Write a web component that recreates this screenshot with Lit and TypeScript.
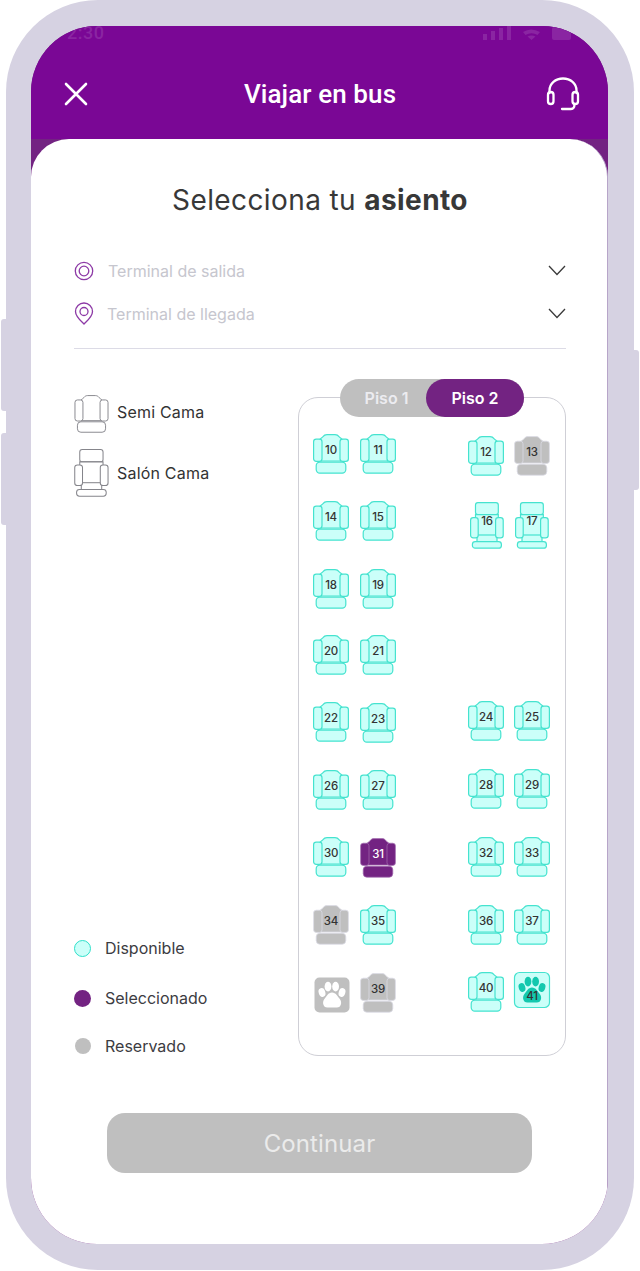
import { LitElement, html, css, svg } from "lit";
import { customElement } from "lit/decorators.js";

type Kind = "std" | "tall" | "paw";
type St = "a" | "s" | "r";
interface Seat { n?: number; col: number; row: number; st: St; kind: Kind; dy: number; dx?: number; }

const S = (n: number | undefined, col: number, row: number, st: St, dy = 0, kind: Kind = "std", dx = 0): Seat =>
  ({ n, col, row, st, kind, dy, dx });

const seats: Seat[] = [
  S(10, 0, 0, "a", 0), S(11, 1, 0, "a", 0), S(12, 2, 0, "a", 2), S(13, 3, 0, "r", 2),
  S(14, 0, 1, "a", 0), S(15, 1, 1, "a", 0), S(16, 2, 1, "a", 1, "tall", 2), S(17, 3, 1, "a", 1, "tall", 1),
  S(18, 0, 2, "a", 0), S(19, 1, 2, "a", 0),
  S(20, 0, 3, "a", -1), S(21, 1, 3, "a", -1),
  S(22, 0, 4, "a", -1), S(23, 1, 4, "a", 0), S(24, 2, 4, "a", -2), S(25, 3, 4, "a", -2),
  S(26, 0, 5, "a", -1), S(27, 1, 5, "a", -1), S(28, 2, 5, "a", -2), S(29, 3, 5, "a", -2),
  S(30, 0, 6, "a", -1), S(31, 1, 6, "s", 0), S(32, 2, 6, "a", -1), S(33, 3, 6, "a", -1),
  S(34, 0, 7, "r", 0), S(35, 1, 7, "a", 0), S(36, 2, 7, "a", 0), S(37, 3, 7, "a", 0),
  S(undefined, 0, 8, "r", 4, "paw", 1), S(39, 1, 8, "r", 0), S(40, 2, 8, "a", -1), S(41, 3, 8, "a", -1, "paw"),
];

const stdShape = svg`
  <path class="b" d="M5.5 27V8.500C5.500 4.500 8.500 4.800 10 2.700C11 1.200 12.500.6 14 .6H22C23.500.6 25 1.200 26 2.700C27.500 4.800 30.500 4.500 30.500 8.500V27Z"/>
  <rect class="b" x="3.200" y="28.200" width="29.600" height="11" rx="3.600"/>
  <rect class="b" x=".6" y="5.200" width="8.400" height="22.200" rx="2.600"/>
  <rect class="b" x="27" y="5.200" width="8.400" height="22.200" rx="2.600"/>`;

const tallShape = svg`
  <rect class="b" x="5.500" y=".6" width="22.800" height="12" rx="2.400"/>
  <path class="b" d="M5.500 12.600H28.300V35H5.500Z"/>
  <rect class="b" x="7" y="33" width="20" height="7"/>
  <rect class="b" x="2.400" y="39.600" width="29" height="6.600" rx="2.800"/>
  <rect class="b" x=".6" y="15.600" width="7.600" height="20.200" rx="2.600"/>
  <rect class="b" x="25.600" y="15.600" width="7.600" height="20.200" rx="2.600"/>`;

const pawShape = svg`
  <rect class="tile" x=".5" y=".5" width="35" height="35" rx="5"/>
  <g class="p">
    <ellipse cx="8" cy="15.500" rx="3.300" ry="4.400" transform="rotate(-18 8 15.500)"/>
    <ellipse cx="14" cy="9.600" rx="3.400" ry="4.900"/>
    <ellipse cx="21.600" cy="9.600" rx="3.400" ry="4.900"/>
    <ellipse cx="28" cy="15.500" rx="3.300" ry="4.400" transform="rotate(18 28 15.500)"/>
    <path d="M18 15.600C14 15.600 12.800 19.400 10.600 21.800C7.800 25 9 30.600 13.400 30.600H22.800C27.400 30.600 28.400 25 25.600 21.800C23.400 19.400 22 15.600 18 15.600Z"/>
  </g>`;

@customElement("seat-icon")
export class SeatIcon extends LitElement {
  static properties = { seat: { attribute: false } };
  declare seat: Seat;
  static styles = css`
    :host { display: block; position: relative; width: fit-content; }
    svg { display: block; overflow: visible; }
    .b { stroke-width: 1.2; }
    .a .b { fill: #cbfff9; stroke: #45e3cf; }
    .s .b { fill: #732382; stroke: #a36fb0; stroke-width: .7; }
    .r .b { fill: #bfbfbf; stroke: #dcdce6; stroke-width: .8; }
    .a .tile { fill: #cbfff9; stroke: #45e3cf; stroke-width: 1.2; }
    .r .tile { fill: #bfbfbf; stroke: none; }
    .a .p { fill: #13c8ae; }
    .r .p { fill: #fff; }
    .num {
      position: absolute; left: 0; right: 0; text-align: center;
      font: 500 11.5px/14px Inter, "Liberation Sans", sans-serif;
      color: #333; letter-spacing: -.2px;
    }
    .num.s { color: #fff; }
    .std { top: 9px; }
    .tall { top: 12px; }
    .paw { top: 17px; }
  `;
  render() {
    const s = this.seat;
    const dims = s.kind === "tall" ? [34, 47] : s.kind === "paw" ? [36, 36] : [36, 40];
    const shape = s.kind === "tall" ? tallShape : s.kind === "paw" ? pawShape : stdShape;
    return html`
      <svg class=${s.st} width=${dims[0]} height=${dims[1]} viewBox="0 0 ${dims[0]} ${dims[1]}">${shape}</svg>
      ${s.n !== undefined ? html`<span class="num ${s.kind} ${s.st}">${s.n}</span>` : ""}
    `;
  }
}

@customElement("app-root")
export class AppRoot extends LitElement {
  static styles = css`
    :host { display: block; width: 640px; height: 1271px; background: #fff; position: relative; overflow: hidden;
      font-family: Inter, "Liberation Sans", sans-serif; }
    .bump { position: absolute; width: 8px; background: #d6d2e2; border-radius: 3px; }
    .b1 { left: 1px; top: 319px; height: 92px; }
    .b2 { left: 1px; top: 433px; height: 92px; }
    .b3 { right: 1px; top: 350px; height: 140px; }
    .frame { position: relative; box-sizing: border-box; margin-left: 6px; width: 628px; height: 1270px;
      background: #d6d2e2; border-radius: 92px; padding: 26px 26px 26px 25px; }
    .screen { height: 1218px; border-radius: 66px; overflow: hidden; background: #732382;
      display: flex; flex-direction: column; }
    .head { height: 113px; background: #7a0795; color: #fff; flex: none; box-sizing: border-box; }
    .status { height: 14px; display: flex; align-items: center; justify-content: space-between;
      padding: 0 37px 0 36px; color: #8a25a2; font: 500 18px/14px Roboto, sans-serif; letter-spacing: .5px; }
    .status svg { display: block; }
    .nav { display: flex; align-items: center; justify-content: space-between; padding: 37px 28px 0 33px; }
    .nav h1 { margin: 0 0 0 6px; font: 500 26px/34px Roboto, sans-serif; letter-spacing: .1px; }
    .nav svg { display: block; }
    .card { flex: 1; background: #fff; border-radius: 38px 38px 0 0; border-right: 1px solid #b7a5c9;
      padding: 44px 41px 0 43px; box-sizing: border-box; }
    .title { margin: 0; text-align: center; font: 400 28px/34px Inter, sans-serif; color: #383838; letter-spacing: .4px; }
    .title b { font-weight: 700; }
    .terms { margin-top: 32px; border-bottom: 1px solid #dcdbe6; padding-bottom: 13px; }
    .term { height: 43px; display: flex; align-items: center; color: #c6c6ce; font-size: 16px; }
    .term svg.ic { flex: none; margin-right: 14px; }
    .term .ch { margin-left: auto; }
    .main { display: flex; justify-content: space-between; margin-top: 30px; }
    .left { display: flex; flex-direction: column; font-size: 16px; color: #333; padding-top: 16px; }
    .lg { display: flex; align-items: center; gap: 8px; letter-spacing: .2px; }
    .lg svg { display: block; }
    .lg .up { margin-bottom: 4px; }
    .lg + .lg { margin-top: 16px; }
    .status-list { margin-top: auto; color: #3c3c42; }
    .dot-row { display: flex; align-items: center; height: 20px; gap: 14px; }
    .dot-row + .dot-row { margin-top: 30px; }
    .dot-row:last-child { margin-top: 28px; }
    .dot { width: 17px; height: 17px; border-radius: 50%; box-sizing: border-box; flex: none; }
    .dot.a { background: #cbfff9; border: 1.5px solid #2fe0ca; }
    .dot.s { background: #732382; }
    .dot.r { background: #bfbfbf; width: 16px; height: 16px; margin: 0 .5px; }
    .right { width: 268px; display: flex; flex-direction: column; }
    .pills { position: relative; z-index: 1; align-self: center; display: flex; width: 184px; height: 38px;
      margin-bottom: -20px; background: #bfbfbf; border-radius: 19px; font-size: 16px; font-weight: 600; }
    .pill { display: flex; align-items: center; justify-content: center; color: #ececf0; flex: 1; padding-left: 7px; }
    .pill.on { flex: none; width: 98px; background: #732382; border-radius: 19px; color: #fff; padding: 0; }
    .panel { box-sizing: border-box; height: 659px; border: 1px solid #cfcfd6; border-radius: 20px; padding: 36px 0 0 14px;
      display: grid; grid-template-columns: 47px 108px 46px 36px; grid-auto-rows: 67.33px; align-items: start; }
    .btn { margin: 57px 0 0 33px; width: 425px; height: 60px; border-radius: 18px; background: #bfbfbf;
      display: flex; align-items: center; justify-content: center; color: #ebebeb; font-size: 24px; letter-spacing: .1px; }
  `;

  seatEl(s: Seat) {
    return html`<seat-icon .seat=${s}
      style="grid-column:${s.col + 1};grid-row:${s.row + 1};margin-top:${s.dy}px;margin-left:${s.dx || 0}px"></seat-icon>`;
  }

  render() {
    return html`
      <div class="bump b1"></div><div class="bump b2"></div><div class="bump b3"></div>
      <div class="frame">
        <div class="screen">
          <div class="head">
            <div class="status">
              <span>2:30</span>
              <svg width="88" height="14" viewBox="0 0 88 14" fill="#8a25a2">
                <rect x="0" y="8" width="4" height="6"/><rect x="8" y="5" width="4" height="9"/>
                <rect x="16" y="2" width="4" height="12"/><rect x="24" y="0" width="4" height="14"/>
                <path d="M40 6q8-5 17 0l-2.500 3q-6-3.500-12 0zM44.500 10.500q4-2 8 0l-4 3.500z"/>
                <rect x="69" y="1" width="19" height="13" rx="2"/>
              </svg>
            </div>
            <div class="nav">
              <svg width="24" height="24" viewBox="0 0 24 24" fill="none" stroke="#fff" stroke-width="2.600" stroke-linecap="round">
                <path d="M2 2L22 22M22 2L2 22"/>
              </svg>
              <h1>Viajar en bus</h1>
              <svg width="34" height="34" viewBox="0 0 34 34" fill="none" stroke="#fff" stroke-width="2.300" stroke-linecap="round" stroke-linejoin="round">
                <path d="M3.500 16V13.500C3.500 6.500 9.500 1.500 17 1.500S30.500 6.500 30.500 13.500V16"/>
                <rect x="2" y="15" width="5.500" height="12" rx="2.750"/>
                <rect x="26.500" y="15" width="5.500" height="12" rx="2.750"/>
                <path d="M28.500 27C28.500 30 27.500 32 25 32H16"/>
              </svg>
            </div>
          </div>
          <div class="card">
            <h2 class="title">Selecciona tu <b>asiento</b></h2>
            <div class="terms">
              <div class="term">
                <svg class="ic" width="20" height="20" viewBox="0 0 20 20" fill="none" stroke="#8d3aa6" stroke-width="1.300">
                  <circle cx="10" cy="10" r="8.700"/><circle cx="10" cy="10" r="4.800"/>
                </svg>
                <span>Terminal de salida</span>
                <svg class="ch" width="18" height="11" viewBox="0 0 18 11" fill="none" stroke="#3a3a3a" stroke-width="1.300">
                  <path d="M1 1L9 9.500L17 1"/>
                </svg>
              </div>
              <div class="term">
                <svg class="ic" style="margin-right:13px" width="20" height="23" viewBox="0 0 20 23" fill="none" stroke="#8d3aa6" stroke-width="1.300">
                  <path d="M10 22C6 18 1.500 14.500 1.500 9.500A8.500 8.500 0 0 1 18.500 9.500C18.500 14.500 14 18 10 22Z"/><circle cx="10" cy="9.500" r="4"/>
                </svg>
                <span>Terminal de llegada</span>
                <svg class="ch" width="18" height="11" viewBox="0 0 18 11" fill="none" stroke="#3a3a3a" stroke-width="1.300">
                  <path d="M1 1L9 9.500L17 1"/>
                </svg>
              </div>
            </div>
            <div class="main">
              <div class="left">
                <div class="lg">
                  <svg width="35" height="38" viewBox="0 0 36 40" fill="#fff" stroke="#85858b" stroke-width="1">${stdShape}</svg>
                  <span class="up">Semi Cama</span>
                </div>
                <div class="lg">
                  <svg width="35" height="48" viewBox="0 0 34 47" fill="#fff" stroke="#85858b" stroke-width="1">${tallShape}</svg>
                  <span>Salón Cama</span>
                </div>
                <div class="status-list">
                  <div class="dot-row"><span class="dot a"></span>Disponible</div>
                  <div class="dot-row"><span class="dot s"></span>Seleccionado</div>
                  <div class="dot-row"><span class="dot r"></span>Reservado</div>
                </div>
              </div>
              <div class="right">
                <div class="pills">
                  <div class="pill">Piso 1</div>
                  <div class="pill on">Piso 2</div>
                </div>
                <div class="panel">${seats.map((s) => this.seatEl(s))}</div>
              </div>
            </div>
            <div class="btn">Continuar</div>
          </div>
        </div>
      </div>
    `;
  }
}
